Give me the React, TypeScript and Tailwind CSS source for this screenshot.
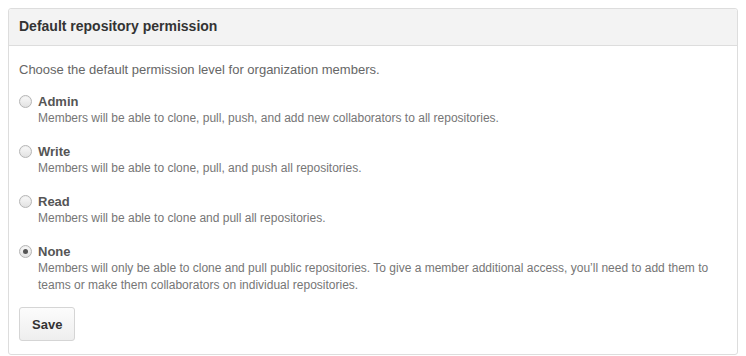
import { useState } from 'react';

interface PermissionOption {
  id: string;
  label: string;
  description: string;
}

const options: PermissionOption[] = [
  {
    id: 'admin',
    label: 'Admin',
    description: 'Members will be able to clone, pull, push, and add new collaborators to all repositories.',
  },
  {
    id: 'write',
    label: 'Write',
    description: 'Members will be able to clone, pull, and push all repositories.',
  },
  {
    id: 'read',
    label: 'Read',
    description: 'Members will be able to clone and pull all repositories.',
  },
  {
    id: 'none',
    label: 'None',
    description:
      'Members will only be able to clone and pull public repositories. To give a member additional access, you\u2019ll need to add them to teams or make them collaborators on individual repositories.',
  },
];

const Radio = ({ checked }: { checked: boolean }) => (
  <span className="mt-[2px] flex h-[13px] w-[13px] shrink-0 items-center justify-center rounded-full border border-[#b5b5b5] bg-gradient-to-b from-[#fafafa] to-[#e2e2e2] shadow-[inset_0_1px_1px_rgba(0,0,0,0.05)]">
    {checked && <span className="h-[5px] w-[5px] rounded-full bg-[#555]" />}
  </span>
);

const App = () => {
  const [selected, setSelected] = useState('none');

  return (
    <div className="p-2 font-['Liberation_Sans',Arial,sans-serif] text-[13px] leading-[17px] text-[#333]">
      <div className="rounded-[3px] border border-[#dddddd] bg-white">
        {/* Header */}
        <div className="rounded-t-[3px] border-b border-[#dddddd] bg-[#f3f3f3] px-[10px] pt-[9px] pb-[11px]">
          <h3 className="text-[14px] font-bold leading-[16px] text-[#333]">Default repository permission</h3>
        </div>

        {/* Body */}
        <div className="px-[10px] pt-[15px] pb-[13px]">
          <p className="text-[#666]">Choose the default permission level for organization members.</p>

          <div className="mt-[15px] flex flex-col gap-[16px]">
            {options.map((opt) => (
              <label key={opt.id} className="flex cursor-pointer gap-[6px]" onClick={() => setSelected(opt.id)}>
                <Radio checked={selected === opt.id} />
                <div>
                  <div className="font-bold text-[#555]">{opt.label}</div>
                  <div className="text-[12px] leading-[17px] text-[#767676]">{opt.description}</div>
                </div>
              </label>
            ))}
          </div>

          <button className="mt-[13px] h-[34px] rounded-[3px] border border-[#d5d5d5] bg-gradient-to-b from-[#fcfcfc] to-[#eeeeee] px-[12px] text-[13px] font-bold text-[#333]">
            Save
          </button>
        </div>
      </div>
    </div>
  );
};

export default App;
